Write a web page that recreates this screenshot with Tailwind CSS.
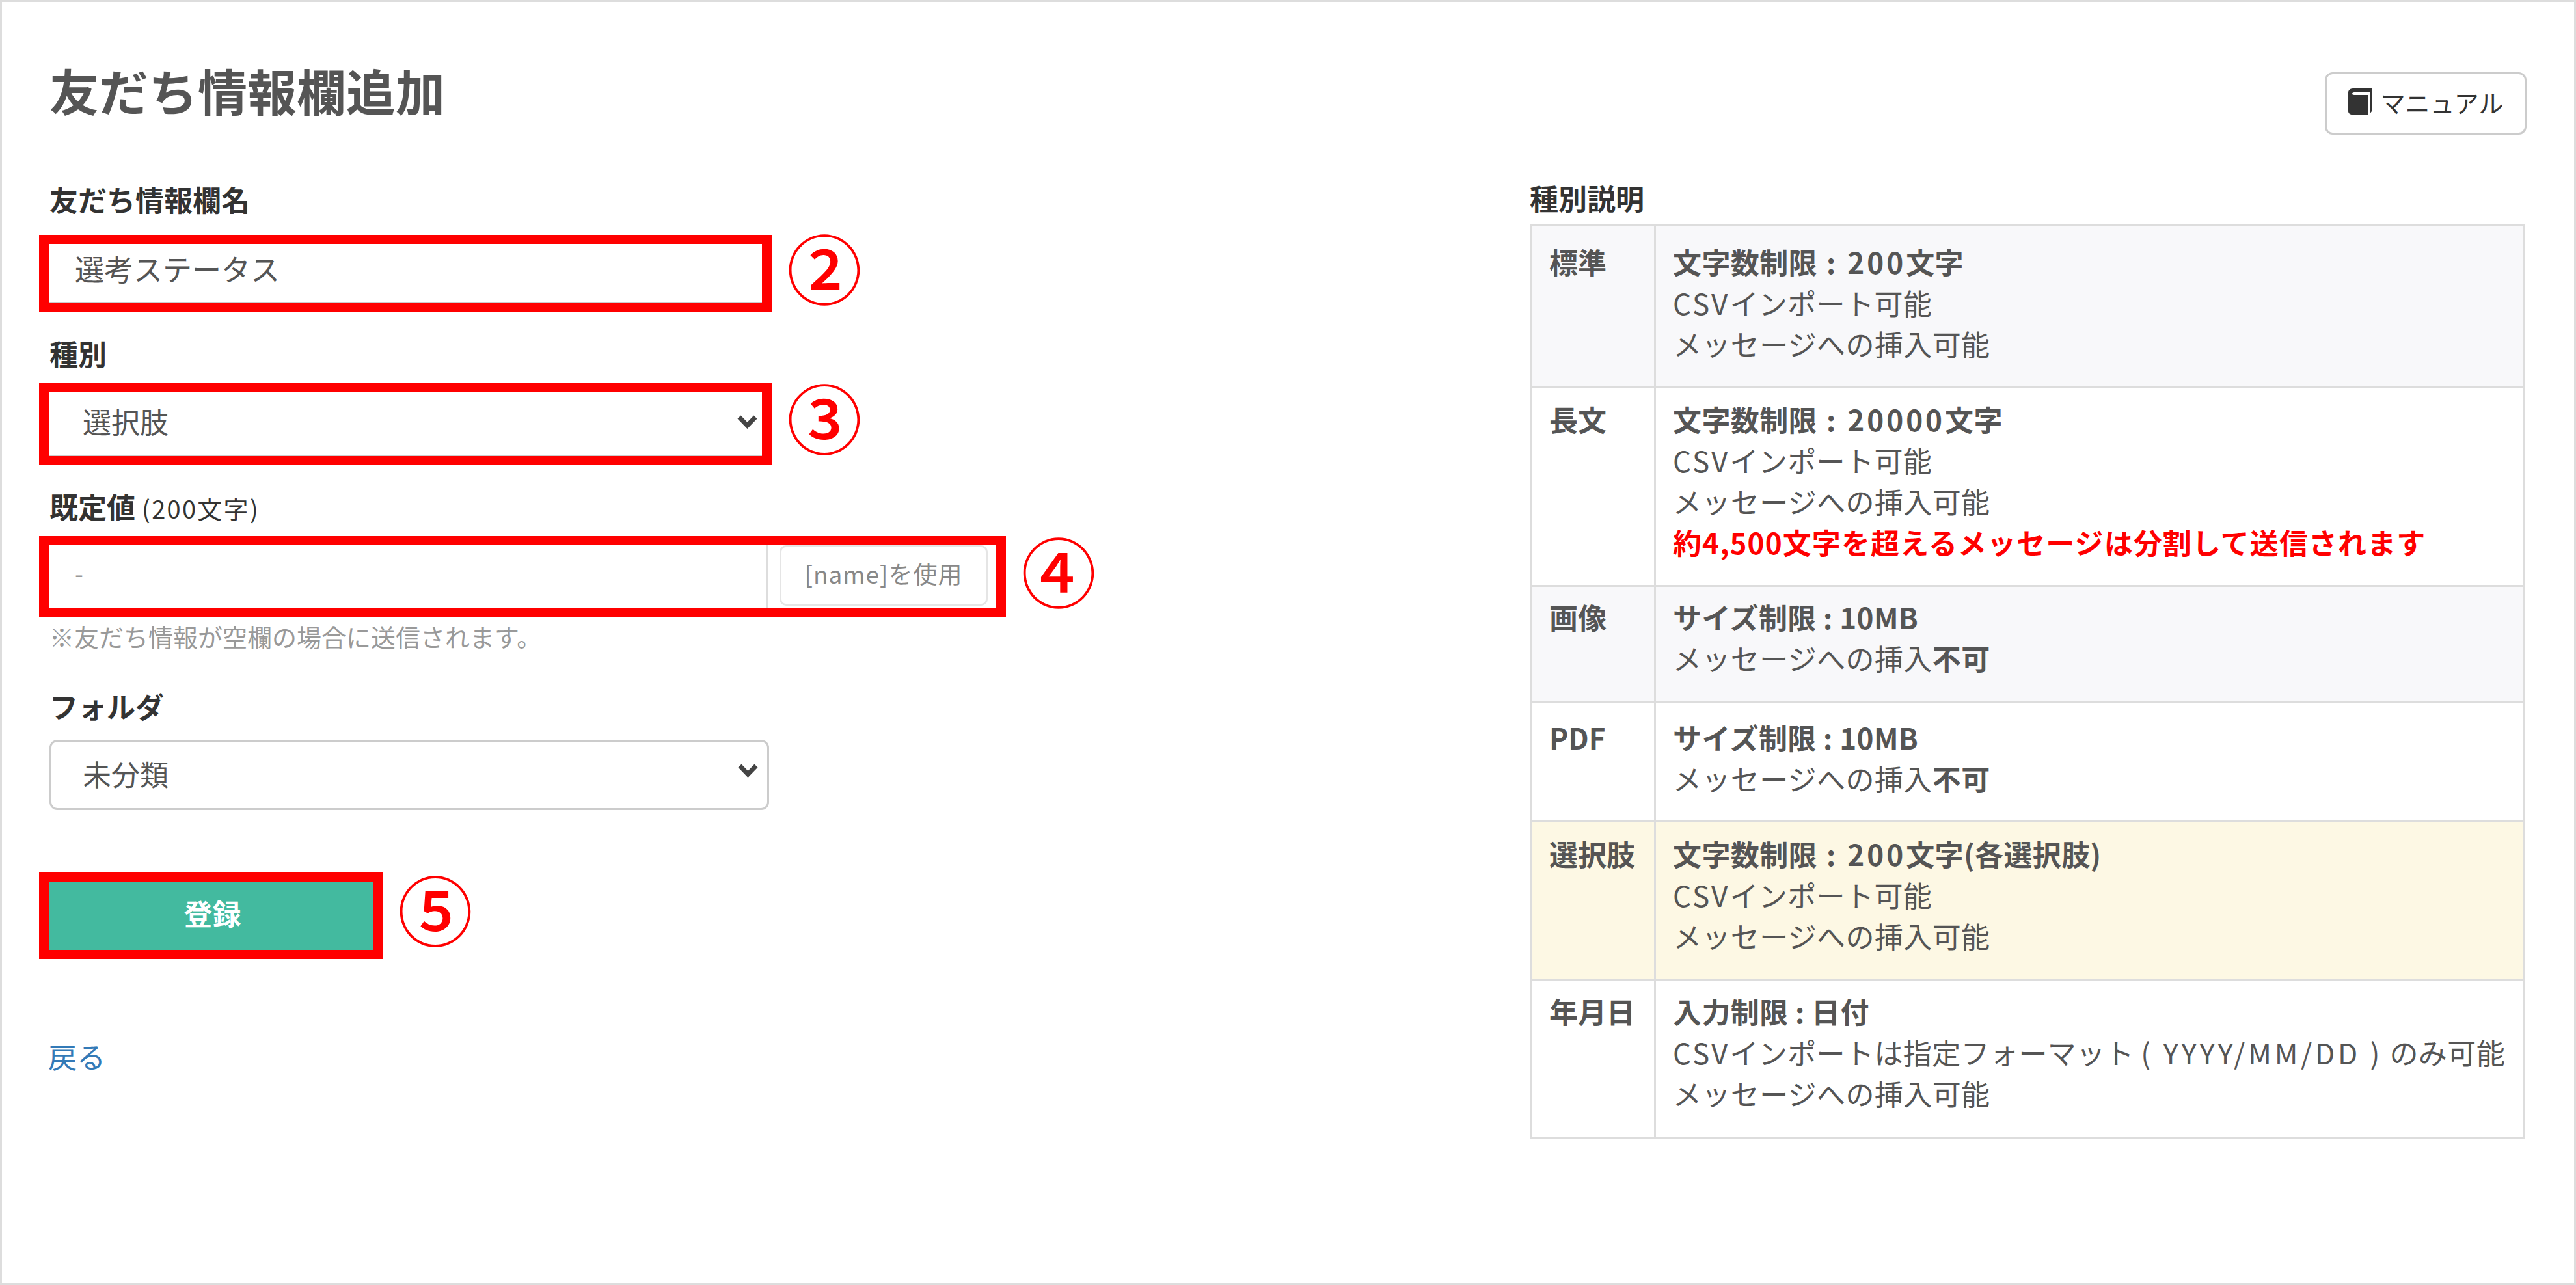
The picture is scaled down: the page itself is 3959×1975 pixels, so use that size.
<!DOCTYPE html>
<html lang="ja">
<head>
  <meta charset="UTF-8">
  <title>友だち情報欄追加</title>
  <script src="https://cdn.jsdelivr.net/npm/@tailwindcss/browser@4"></script>
</head>
<body class="bg-white font-['Noto_Sans_CJK_JP','Noto_Sans',sans-serif] text-[#555]">
  <div class="w-[3959px] h-[1975px] box-border border-[3px] border-[#ddd] flex overflow-hidden">

    <!-- left column: form -->
    <div class="w-[2348px] shrink-0 pl-[57px] flex flex-col items-start">
      <h1 class="ml-[16px] mt-[85px] h-[100px] leading-[100px] text-[76px] font-bold text-[#555]">友だち情報欄追加</h1>

      <label class="ml-[16px] mt-[87px] h-[63px] leading-[63px] text-[44px] font-bold text-[#333]">友だち情報欄名</label>
      <div class="flex items-start">
        <div class="mt-[23px] w-[1126px] h-[119px] box-border border-x-[15px] border-y-[14px] border-[#f00]">
          <input type="text" value="選考ステータス" class="w-full h-full box-border pl-[40px] pb-[14px] text-[45px] text-[#555] border-b-2 border-[#ccc] outline-none">
        </div>
        <span class="ml-[23px] mt-[18px] w-[115px] h-[105px] leading-[105px] text-center text-[116px] font-medium text-[#f00]">②</span>
      </div>

      <label class="ml-[16px] mt-[32px] h-[63px] leading-[63px] text-[44px] font-bold text-[#333]">種別</label>
      <div class="flex items-start">
        <div class="relative mt-[13px] w-[1126px] h-[127px] box-border border-x-[15px] border-y-[14px] border-[#f00]">
          <select class="w-full h-full box-border appearance-none pl-[52px] pb-[8px] text-[44px] text-[#555] border-b-2 border-[#ccc] outline-none">
            <option>選択肢</option>
          </select>
          <svg class="absolute right-[7px] top-[36px] w-[31px] h-[21px]" viewBox="0 0 31 21" fill="none" stroke="#444" stroke-width="7"><path d="M3 3l12.500 13L28 3"/></svg>
        </div>
        <span class="ml-[23px] mt-[11px] w-[115px] h-[105px] leading-[105px] text-center text-[116px] font-medium text-[#f00]">③</span>
      </div>

      <label class="ml-[16px] mt-[32px] h-[63px] leading-[63px] text-[44px] font-bold text-[#333]">既定値 <span class="text-[38px] font-normal tracking-[2.300px]">(200文字)</span></label>
      <div class="flex items-start">
        <div class="mt-[14px] w-[1486px] h-[125px] box-border border-x-[15px] border-y-[14px] border-[#f00] flex gap-[17px] overflow-hidden">
          <input type="text" placeholder="-" class="w-[1106px] h-[110px] box-border pl-[40px] pb-[26px] text-[37px] placeholder:text-[#999] border-r-[3px] border-[#ddd] outline-none">
          <button class="w-[320px] h-[93px] box-border border-[3px] border-[#e5e5e5] rounded-[10px] pb-[6px] text-[37px] tracking-[1px] text-[#888]">[name]を使用</button>
        </div>
        <span class="ml-[23px] mt-[12px] w-[115px] h-[105px] leading-[105px] text-center text-[116px] font-medium text-[#f00]">④</span>
      </div>

      <p class="ml-[16px] mt-[4px] h-[50px] leading-[50px] text-[38px] text-[#999]">※友だち情報が空欄の場合に送信されます。</p>

      <label class="ml-[16px] mt-[51px] h-[63px] leading-[63px] text-[44px] font-bold text-[#333]">フォルダ</label>
      <div class="relative ml-[16px] mt-[20px] w-[1106px] h-[108px]">
        <select class="w-full h-full box-border appearance-none pl-[48px] pb-[4px] text-[44px] text-[#555] border-[3px] border-[#ccc] rounded-[12px] outline-none">
          <option>未分類</option>
        </select>
        <svg class="absolute right-[17px] top-[37px] w-[31px] h-[21px]" viewBox="0 0 31 21" fill="none" stroke="#444" stroke-width="7"><path d="M3 3l12.500 13L28 3"/></svg>
      </div>

      <div class="flex items-start">
        <div class="mt-[96px] w-[528px] h-[133px] box-border border-x-[15px] border-y-[14px] border-[#f00]">
          <button class="w-full h-full pl-[5px] pb-[10px] bg-[#43ba9f] text-white text-[44px] font-bold">登録</button>
        </div>
        <span class="ml-[23px] mt-[97px] w-[115px] h-[105px] leading-[105px] text-center text-[116px] font-medium text-[#f00]">⑤</span>
      </div>

      <a class="ml-[14px] mt-[118px] h-[63px] leading-[63px] text-[44px] text-[#337ab7]">戻る</a>
    </div>

    <!-- right column: type description -->
    <div class="w-[1532px] shrink-0 flex flex-col">
      <button class="self-end mt-[108px] w-[310px] h-[96px] box-border border-[3px] border-[#ccc] rounded-[12px] pb-[6px] flex items-center justify-center gap-[14px] text-[38px] text-[#333]">
        <svg class="w-[36px] h-[40px]" viewBox="0 0 36 40"><path fill="#333" d="M7 0h29v35l-3 4V6H9C5 6 5 10 9 10h22v30H6c-3 0-6-2-6-5V6c0-3 3-6 7-6z"/></svg>
        マニュアル
      </button>

      <div class="mt-[66px] h-[63px] leading-[63px] text-[44px] font-bold text-[#333]">種別説明</div>

      <table class="mt-[9px] w-[1529px] border-collapse text-[44px] leading-[63px] [&_td]:border-[3px] [&_td]:border-[#ddd] [&_td]:align-top [&_td:first-child]:w-[191px] [&_td:first-child]:pl-[27px] [&_td:first-child]:font-bold [&_td:last-child]:pl-[26px] [&_td:last-child]:tracking-[0.400px]">
        <tr class="h-[248px] bg-[#f8f8fa]">
          <td class="pt-[23px]">標準</td>
          <td class="pt-[23px]"><b>文字数制限<span class="tracking-[4px]"> : 200</span>文字</b><br><span class="tracking-[3px]">CSV</span>インポート可能<br>メッセージへの挿入可能</td>
        </tr>
        <tr class="h-[306px]">
          <td class="pt-[17px]">長文</td>
          <td class="pt-[17px]"><b>文字数制限<span class="tracking-[4px]"> : 20000</span>文字</b><br><span class="tracking-[3px]">CSV</span>インポート可能<br>メッセージへの挿入可能<br><b class="text-[#f00] tracking-[1.100px]">約4,500文字を超えるメッセージは分割して送信されます</b></td>
        </tr>
        <tr class="h-[179px] bg-[#f8f8fa]">
          <td class="pt-[15px]">画像</td>
          <td class="pt-[15px]"><b>サイズ制限 : 10MB</b><br>メッセージへの挿入<b>不可</b></td>
        </tr>
        <tr class="h-[182px]">
          <td class="pt-[21px]">PDF</td>
          <td class="pt-[21px]"><b>サイズ制限 : 10MB</b><br>メッセージへの挿入<b>不可</b></td>
        </tr>
        <tr class="h-[244px] bg-[#fdf8e4]">
          <td class="pt-[18px]">選択肢</td>
          <td class="pt-[18px]"><b>文字数制限<span class="tracking-[4px]"> : 200</span>文字(各選択肢)</b><br><span class="tracking-[3px]">CSV</span>インポート可能<br>メッセージへの挿入可能</td>
        </tr>
        <tr class="h-[243px]">
          <td class="pt-[16px]">年月日</td>
          <td class="pt-[16px]"><b>入力制限 : 日付</b><br><span class="tracking-[3px]">CSV</span>インポートは指定フォーマット <span class="tracking-[4.700px]">( YYYY/MM/DD )</span> のみ可能<br>メッセージへの挿入可能</td>
        </tr>
      </table>
    </div>
  </div>
</body>
</html>
